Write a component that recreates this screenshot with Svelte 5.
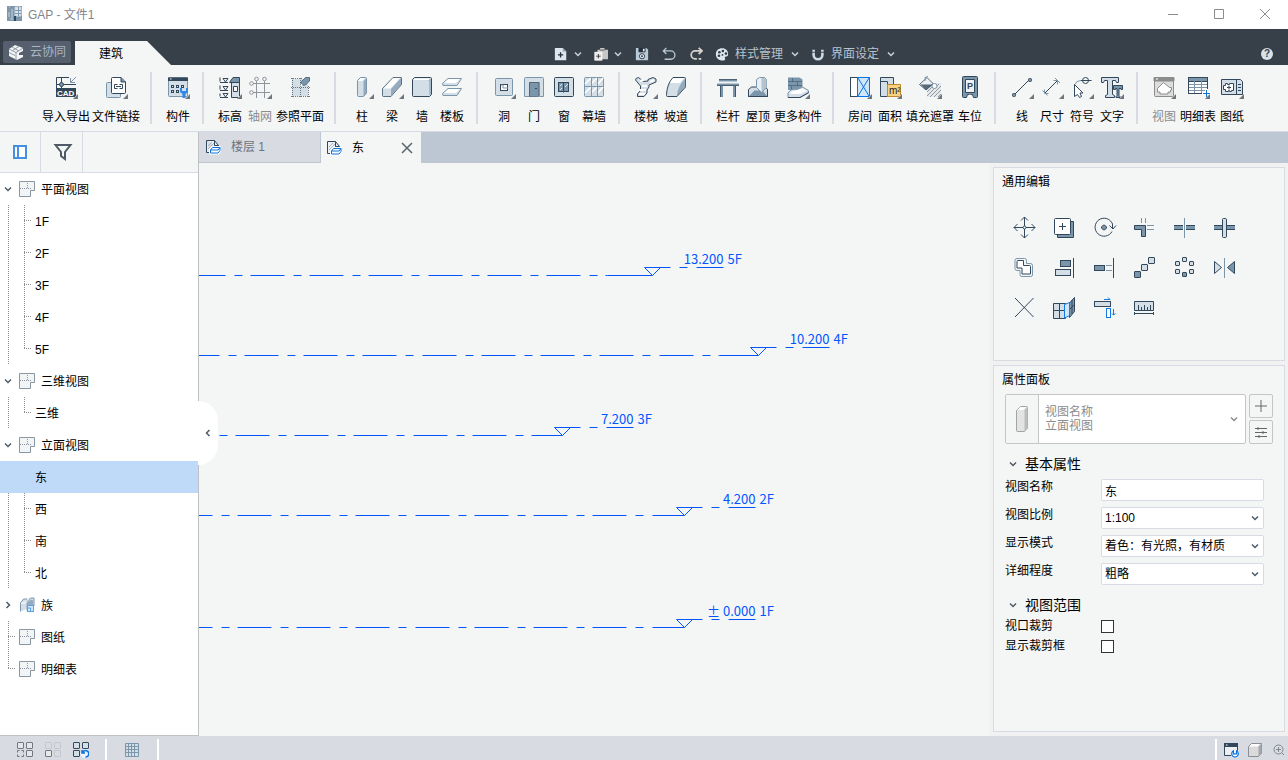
<script lang="ts">
	type Tool = { label: string; icon: string; more?: boolean; disabled?: boolean };

	const D = '#33475b';
	const M = '#7b96ab';
	const L = '#d3dee6';
	const B = '#1479e8';

	const square = (x: number, y: number, s: number, fill = L, stroke = D) =>
		`<rect x="${x}.5" y="${y}.5" width="${s}" height="${s}" rx="0.5" fill="${fill}" stroke="${stroke}"/>`;

	// 24px grid, used by the ribbon and the edit panel
	const icons: Record<string, string> = {
		cad: `<path d="M2.5 12V1.5H15M7.5 1v11M2 8.5h20" stroke="${D}"/><circle cx="7.5" cy="8.5" r="2" fill="${M}" stroke="${D}"/><path d="M22 1l-5 5M16.500 2v4.500H21" stroke="${M}"/><rect x="2" y="12" width="20" height="9" fill="${D}"/><text x="3" y="19.500" font-size="8" font-weight="700" font-family="Liberation Sans, sans-serif" fill="#fff">CAD</text>`,
		link: `<path d="M7 6.500H3.500q-1 0-1 1v13q0 1 1 1h12q1 0 1-1V18" fill="${L}" stroke="${M}"/><path d="M7.500 2.500q0-1 1-1H17l4.500 4.500v10.500q0 1-1 1h-12q-1 0-1-1z" fill="#fff" stroke="${D}"/><path d="M17 1.500V6h4.500" fill="${M}" stroke="${D}"/><path d="M13.500 8.500h-3v4h3M15.500 8.500h3v4h-3M12 10.500h5" stroke="${D}"/>`,
		component: `<rect x="2.500" y="1.500" width="19" height="19" rx="1" fill="${L}" stroke="${M}"/><path d="M2 1.500h20V5H2z" fill="${D}"/><path d="M4 3h1.500" stroke="#fff"/><g stroke="${D}"><rect x="5.500" y="9.500" width="2" height="2"/><rect x="10.500" y="9.500" width="2" height="2"/><rect x="15.500" y="9.500" width="2" height="2"/><rect x="5.500" y="14.500" width="2" height="2"/><rect x="10.500" y="14.500" width="2" height="2"/></g><path d="M14 12v4l2.500 2v4h3v-4l2.500-2v-4h-2v3h-4v-3z" fill="#2f88ec"/>`,
		level: `<path d="M2 6.500h8M2 1.500v4M2 14.500h8M2 9.500v4M2 21.500h8M2 17.500v3M5 2.500h5L7.500 6zM5 10.500h5L7.500 14zM5 17.500h5L7.500 21z" stroke="${D}"/><path d="M13.500 6.500h8v15h-8z" fill="${L}" stroke="${D}"/><path d="M11.500 6.500L15 1.500h6.500v5z" fill="${M}" stroke="${D}"/><path d="M15.500 10.500h4v5h-4z" fill="#fff" stroke="${D}"/>`,
		grid: `<g stroke="#8f959b"><path d="M8.500 5v17M16.500 5v17M5 7.500h17M5 16.500h17"/><circle cx="8.500" cy="3" r="1.800"/><circle cx="16.500" cy="3" r="1.800"/><circle cx="3.500" cy="7.500" r="1.800"/><circle cx="3.500" cy="16.500" r="1.800"/></g>`,
		plane: `<path d="M4 3h16v17H4z" fill="${L}"/><path d="M4.500 2v19M12.500 2v19M20.500 10v11M3 2.500h11M3 11.500h19M3 20.500h19" stroke="${D}" stroke-opacity=".7" stroke-dasharray="1 1"/><path d="M12.500 9.500l1-4 4-4h4v3.500l-4 4z" fill="${M}" stroke="${D}" stroke-opacity=".7"/><path d="M12 10.500l3-1-2-2z" fill="#fff"/>`,
		column: `<path d="M7.500 4.500l3-3h5q1 0 1 1V17l-3 3.500h-5q-1 0-1-1z" fill="${L}" stroke="${M}"/><path d="M13.500 5l3-3V17l-3 3.500z" fill="${M}" opacity=".7"/><path d="M8 5l3-3h4l-2.500 3z" fill="#fff"/>`,
		beam: `<path d="M2.500 12.500L13 1.500h8q.5 0 .5.500v6.500L11 20.500H3.500q-1 0-1-1z" fill="${L}" stroke="${D}" stroke-opacity=".75"/><path d="M11 13L21 2v6.500L11 20z" fill="${M}" opacity=".7"/><path d="M3.500 12.500L13.300 2H20l-9.500 10.500z" fill="#fff"/>`,
		wall: `<path d="M2.500 3.500l2-2h16q1 0 1 1v16l-2 2h-16q-1 0-1-1z" fill="${L}" stroke="${D}"/><path d="M20 4v15M19 4.500l2-2" stroke="${M}"/><path d="M3.500 4l1.500-1.500h15L18.500 4z" fill="#fff"/>`,
		slab: `<g fill="${L}" stroke="${M}"><path d="M2.500 7.500L8 2.500h13.500L17 9.500H3z"/><path d="M2.500 17.500L8 12.500h13.500L17 19.500H3z"/></g><path d="M4 7l4.500-4H20l-4 4zM4 17l4.500-4H20l-4 4z" fill="#fff"/>`,
		hole: `<rect x="3.500" y="2.500" width="17" height="17" rx="1" fill="${L}" stroke="${M}"/><rect x="8.500" y="8.500" width="7" height="6" fill="#fff" stroke="${D}"/><path d="M9 9h2v3h5" stroke="${M}"/>`,
		door: `<path d="M2.500 20.500v-18q0-1 1-1h17q1 0 1 1v18h-4v-14h-10v14z" fill="${L}" stroke="${M}"/><path d="M7.500 6.500h9v14h-9z" fill="${M}" stroke="${D}" stroke-opacity=".6"/><path d="M13 12.500h2" stroke="${D}"/>`,
		window: `<rect x="2.500" y="1.500" width="19" height="19" rx="1" fill="${L}" stroke="${D}"/><rect x="6.500" y="6.500" width="10" height="9" fill="${M}" stroke="${D}"/><path d="M11.500 6.500v10" stroke="${D}"/><path d="M8 10l2-2M8 14l2-2M13 11l3-3" stroke="#dfe8ef"/>`,
		curtain: `<rect x="2.500" y="1.500" width="19" height="19" rx="1" fill="${L}" stroke="${M}"/><path d="M3 8l6-6M3 17l6-6M9 8l6-6M9 17l6-6M16 8l5-6M16 17l5-6" stroke="#fff" stroke-width="1.500"/><path d="M9.500 2v19M15.500 2v19M3 10.500h18" stroke="${M}"/>`,
		stair: `<path d="M1.500 4q0-2 3-2.500l5 4 4.500-.5V3.500l5-2 3 1.500v3l-7 3v2l-2 3v3l-3 3.500H3.500V18l3-3.500V10z" fill="${L}" stroke="${D}"/><path d="M8 10h5M6 14h6M5 18h6M6 5l3-1M16 6l4-2" stroke="#fff" stroke-width="2"/>`,
		ramp: `<path d="M2.500 18.500Q3 8 9 1.500h11.500q1 0 1 1V11L13 20.500H3.500q-1 0-1-1z" fill="${L}" stroke="${D}"/><path d="M13 20Q13 11 21.500 2v9z" fill="${M}" opacity=".7"/><path d="M6 7q1-3 3.500-5H20l-4 5z" fill="#fff"/>`,
		railing: `<path d="M3 4.500h18M1 8.500h22" stroke="${M}" stroke-width="2"/><path d="M3 3.500h18M1 9.500h22" stroke="${D}" stroke-opacity=".8"/><path d="M5.500 10v11M18.500 10v11" stroke="${M}" stroke-width="3"/><path d="M4.500 10v11M19.500 10v11" stroke="${D}" stroke-opacity=".8"/>`,
		roof: `<path d="M2.500 20.500v-7l3-2.500h5l3 2 3-2h3l2 2.500v7z" fill="${L}" stroke="${D}"/><path d="M2.500 20.500l6-6h8l5 6z" fill="${M}"/><path d="M10.500 3.500l3-2h5l2 2v8l-5 5-5-5z" fill="#e9eff3" stroke="${M}"/><path d="M15.500 2h3l2 2v7.500l-5 4.500z" fill="#b3c3d0"/><path d="M2.500 20.500h19v-7" stroke="${D}"/>`,
		more: `<path d="M2 1.500h11.500l3 2V14L2 14z" fill="${M}"/><path d="M2 5.500h14M2 9.500h14M6.500 2v4M11.500 6v4M5.500 10v4" stroke="${D}" stroke-opacity=".5"/><path d="M2 17q3-5 9-3.500L16.500 11l6 3.500v2L14 21.500H2z" fill="${L}" stroke="${M}"/><path d="M4 16l5-1.500 8-2 4 2.500-7 3H5z" fill="#fff"/><path d="M2 21.500h12l9-5" stroke="${D}"/>`,
		room: `<rect x="2.500" y="1.500" width="7" height="19" fill="#fff" stroke="${D}"/><rect x="9.500" y="1.500" width="12" height="19" fill="#cfe6fb" stroke="#0c72e0"/><path d="M10 2l11 18M21 2L10 20" stroke="#0c72e0"/>`,
		area: `<path d="M2.500 1.500h13v9h-13z" fill="${L}" stroke="${D}"/><path d="M2.500 5.500h7v15h-7z" fill="${L}" stroke="${D}"/><path d="M9.500 8.500h13v12h-13z" fill="#f9d27f" stroke="#c08a2a"/><text x="11" y="18" font-size="10" font-family="Liberation Sans, sans-serif" fill="#223">m²</text>`,
		mask: `<path d="M9 7h14v14H9z" fill="#e6e9ec"/><path d="M9 12l4-4M9 16l8-8M9 20l12-12M12 21L23 10M16 21l7-7M20 21l3-3" stroke="#8f99a3"/><path d="M1.500 8.500L9 1.500l6 6-7 6.500z" fill="#eef2f5" stroke="${D}" stroke-opacity=".8"/><path d="M2.500 8.500H15L8 14z" fill="${D}" opacity=".8"/><path d="M7 5V1.500l3-1" stroke="${M}"/><circle cx="16.500" cy="10" r="2.500" fill="#fff" stroke="${M}"/>`,
		parking: `<path d="M5.500.500h13q1 0 1 1v19q0 1-1 1h-3l-1-3h-5l-1 3h-3q-1 0-1-1v-19q0-1 1-1z" fill="${M}" stroke="${D}"/><path d="M7.500 3.500h9v13h-9z" fill="#eef2f5" stroke="${D}"/><text x="9" y="13" font-size="9" font-weight="700" font-family="Liberation Sans, sans-serif" fill="${D}">P</text><path d="M10 21l2-3 2 3" fill="#fff"/>`,
		line: `<path d="M4 19L19 4" stroke="${D}"/><rect x="2.500" y="17.500" width="3" height="3" rx="1" fill="${M}" stroke="${D}"/><rect x="18.500" y="2.500" width="3" height="3" rx="1" fill="${M}" stroke="${D}"/>`,
		dimension: `<path d="M5 17L17 5" stroke="${D}"/><path d="M4.500 13.500v4h4M13.500 4.500h4v4M2.500 14.500l5 5M15 2l5 5" stroke="${M}"/>`,
		symbol: `<path d="M5 8.500q1-4 6-4h11" stroke="${M}"/><circle cx="15.500" cy="4.500" r="3" stroke="${D}"/><path d="M11 4.500h10" stroke="${D}"/><path d="M4.500 8.500v12l3-2 2 3 2-1-1.500-3.500h3z" fill="#fff" stroke="${D}"/>`,
		text: `<path d="M1.500 1.500h17v5h-2l-1-2h-3v14l2 1v2h-9v-2l2-1v-14h-3l-1 2h-2z" fill="${L}" stroke="${D}"/><path d="M13.500 9.500h9v4h-1.500v-1h-2v7l1 1v1h-4v-1l1-1v-7h-1.500v1h-2z" fill="${M}" stroke="${D}"/>`,
		view: `<g stroke="#8c8c8c"><rect x="2.500" y="1.500" width="19" height="19" rx="1" fill="#dcdcdc"/><path d="M2 1.500h20V5H2z" fill="#8c8c8c"/><path d="M5.500 12.500l6-6 6 5h2v2.500h-1v2h-2.500v2h-8v-2h-2.500z" fill="#fff"/></g><path d="M4 3h2" stroke="#fff"/>`,
		schedule: `<rect x="2.500" y="1.500" width="19" height="16" fill="#fff" stroke="${D}"/><path d="M2.500 1.500h19v4h-19z" fill="${M}" stroke="${D}"/><path d="M3 8.500h18M3 11.500h18M3 14.500h18M8.500 5v12M15.500 5v12" stroke="${M}"/><path d="M20.500 13v9M16 17.500h9" stroke="#fff" stroke-width="3"/><path d="M20.500 14v7M17 17.500h7" stroke="#0c72e0"/>`,
		sheet: `<path d="M1.500 3.500h19l2 2v13h-21z" fill="${L}" stroke="${D}"/><path d="M16.500 4v14M18 8.500h3M18 11.500h3M18 14.500h3" stroke="${D}"/><path d="M5.500 7.500h2v1h2v-1h4v7h-2v1h-2v-1h-1v1h-3v-2h-2v-4h2zM7 11.500h4M9 9.500v4" fill="#fff" stroke="${D}"/>`,
		move: `<path d="M12.500 2v21M2 12.500h21M9 5.500l3.500-3.500L16 5.500M9 19.500l3.500 3.500 3.500-3.500M5.500 9L2 12.500 5.500 16M19.500 9l3.500 3.500-3.500 3.500" stroke="${D}"/><circle cx="12.500" cy="12.500" r="1.500" fill="#fff" stroke="${D}"/>`,
		copy: `<path d="M5.500 6.500h16v16h-16z" fill="${M}" stroke="${D}"/><rect x="2.500" y="3.500" width="16" height="16" rx="1" fill="#fff" stroke="${D}"/><path d="M7 11.500h7M10.500 8v7" stroke="${D}"/>`,
		rotate: `<path d="M20 16.500A9 9 0 1 1 20.500 9v4.500M17.500 10.500l3.500 3.500 3-3.500" stroke="${D}"/><path d="M11.500 10h1l2 2v1l-2 2h-1l-2-2v-1z" fill="${M}" stroke="${D}"/>`,
		trim: `<path d="M2.500 10.500h11v11h-4v-7h-7z" fill="${M}" stroke="${D}"/><path d="M9.500 3v5M13.500 3v5M15 10.500h7M15 14.500h7" stroke="${M}"/>`,
		split: `<path d="M2 12.500h21" stroke="${M}" stroke-width="3"/><path d="M2 10.500h21M2 14.500h21" stroke="${D}"/><path d="M12.500 9v8" stroke="#f4f6f6" stroke-width="3"/><path d="M12.500 3v20" stroke="${M}"/>`,
		splitGap: `<path d="M2 12.500h21" stroke="${M}" stroke-width="3"/><path d="M2 10.500h21M2 14.500h21" stroke="${D}"/><rect x="10.500" y="3.500" width="4" height="19" rx="1" fill="${L}" stroke="${D}"/>`,
		offset: `<path d="M5 3.500h7.500q2 0 2 2v3h4q2 0 2 2V20q0 1.500-2 1.500H10q-2 0-2-2v-4H5q-2 0-2-2v-8q0-2 2-2z" stroke="${M}"/><path d="M5 6.500q0-1 1-1h5.500v5h6q1 0 1 1v7.500h-8.500v-6H5z" fill="#fff" stroke="${D}"/>`,
		align: `<rect x="8.500" y="5.500" width="10" height="6" fill="${M}" stroke="${D}"/><rect x="3.500" y="14.500" width="15" height="6" fill="${L}" stroke="${D}"/><path d="M21.500 3v20" stroke="${D}"/>`,
		extend: `<rect x="2.500" y="10.500" width="10" height="5" fill="${M}" stroke="${D}"/><path d="M14 10.500h6M14 15.500h6" stroke="${M}"/><path d="M21.500 3v20" stroke="${D}"/>`,
		array: square(2, 16, 6, M) + square(9, 9, 6) + square(16, 2, 6),
		radial: square(10, 2, 4) + square(3, 6, 4) + square(17, 6, 4) + square(3, 14, 4) + square(17, 14, 4) + square(10, 17, 4, M),
		mirror: `<path d="M2.500 6.500v12l7-6z" fill="${L}" stroke="${D}"/><path d="M22.500 6.500v12l-7-6z" fill="${M}" stroke="${D}"/><path d="M12.500 3v20" stroke="${M}"/>`,
		erase: `<path d="M3 3l18.500 19M21.500 3L3 22" stroke="${D}"/>`,
		facade: `<path d="M1.500 8.500h12v15h-12z" fill="${L}" stroke="${D}"/><path d="M2 15.500h12M7.500 8.500v15" stroke="${D}"/><path d="M17.500 8l5-5.500v14l-5 6z" fill="${M}" stroke="${D}"/><path d="M20 5v14M17 15l6-6" stroke="${D}"/><path d="M12.500 9.500l5-2v13l-5 2.500z" fill="#cfe6fb" stroke="${B}"/>`,
		pull: `<rect x="2.500" y="6.500" width="16" height="5" fill="${L}" stroke="${D}"/><path d="M12 4.500h6l-2-2M21.500 14v6M20 18.500l1.500 1.500 2-1.500" stroke="${B}"/><rect x="14.500" y="13.500" width="4" height="9" fill="#fff" stroke="${B}"/>`,
		measure: `<path d="M2.500 6.500h19v9h-19z" fill="${L}" stroke="${D}"/><path d="M6.500 10v5M9.500 12v3M12.500 10v5M15.500 12v3M18.500 10v5M2 18.500h20M2.500 17v3M21.500 17v3" stroke="${D}"/>`
	};

	// 16px grid
	const small: Record<string, string> = {
		app: `<rect x="0" y="0" width="15" height="15" fill="#7f97ac"/><path d="M8 1h6v9H8zM2 1h1M5 3v9M2 6v5M3 13h3" fill="#dfe8ef" stroke="#c2d1dd"/><path d="M11.500 1v9M8 4.500h6M8 7.500h6" stroke="#7f97ac"/><path d="M8 10v5" stroke="#2d4a66" stroke-width="2"/>`,
		cloud: `<path d="M1 5l6-4 8 3v3l-4 2v2h4v2l-6 3-8-4z" fill="#f4f6f6"/><path d="M1 5l7 3.500L15 4M1 8.500l6 3M4 3l7 4M8 8v8M11 2.500L4.500 6.500" stroke="#909aa6"/>`,
		add: `<path d="M1 1h9l4 4v10H1z" fill="#dce6ee"/><path d="M10 1v4h4" fill="#8fa3b5"/><path d="M7.500 6v6M4.500 9h6" stroke="#26313d" stroke-width="1.500"/>`,
		paste: `<path d="M4 3h3V1h5v2h4v11H4z" fill="#c6c6c6"/><path d="M7 3.500h5" stroke="#555"/><rect x="1" y="6" width="8" height="9" fill="#e8e8e8" stroke="#fff"/><path d="M5 8v5M2.500 10.500h5" stroke="#333"/>`,
		save: `<path d="M1 1h12l2 2v12H1z" fill="#b9cbd9"/><path d="M4 1h8v5H4z" fill="#26313d"/><path d="M9 2h2v3H9z" fill="#dce6ee"/><circle cx="8" cy="10.500" r="3" fill="#dce6ee" stroke="#26313d"/><circle cx="8" cy="10.500" r="1" fill="#26313d"/>`,
		undo: `<path d="M5 1L1.500 4.500 5 8M2 4.500h8a4.500 4.500 0 0 1 0 9.500H3" stroke="#b9cbd9" stroke-width="1.500"/>`,
		redo: `<path d="M11 1l4 3.500L11 8M14 4.500H7a4.500 4.500 0 0 0 0 9h2M11 13.500h3" stroke="#d6d2cc" stroke-width="2"/>`,
		palette: `<path d="M8 1.500c4.500 0 7 3 7 6.500 0 3-2 3-3 3s-1 1-.5 2-.5 2.500-2.500 2.500C5 15.500 1 13 1 8.500S4 1.500 8 1.500z" fill="#dce6ee"/><g fill="#33404d"><circle cx="5" cy="6" r="1.500"/><circle cx="9" cy="4.500" r="1.500"/><circle cx="12.500" cy="7.500" r="1.500"/><circle cx="4.500" cy="10" r="1.500"/><circle cx="8.500" cy="9" r="1"/></g>`,
		magnet: `<path d="M3 3v6a5 5 0 0 0 10 0V3" stroke="#c9d9e5" stroke-width="3"/><path d="M1 6h4M11 6h4" stroke="#33404d"/>`,
		doc: `<path d="M1.500 1.500h8l4 5v3M1.500 1.500v12h4" fill="#e8eef3" stroke="${D}"/><path d="M3 7l4-4M3 10l6-6M4 12l6-6" stroke="#9fb3c4"/><path d="M9.500 1.500v5h4" stroke="${D}"/><path d="M5.500 10.500l2-2h7.500v3l-2 2.500H5.500z" fill="#fff" stroke="#fff" stroke-width="3"/><path d="M5.500 11l2-2.500h7.500v3l-2 2.500H5.500zM5.500 11h7.500l2-2.500" fill="#fff" stroke="#0c72e0"/>`,
		sheetTree: `<path d="M.5.500h15v9h-4v6H.500z" fill="#f2f4f6" stroke="#8b96a3"/><path d="M8.500 2v6M1 7.500h11" stroke="#8b96a3" stroke-dasharray="1 1"/>`,
		family: `<path d="M1.500 14.500V6l3-4h4l-1 3 4-4H15v8" fill="${L}" stroke="${M}"/><path d="M7.500 14V6L12 2.500l2 1V9h-4v5z" fill="${M}" opacity=".7"/><path d="M2 6h4l3-4" stroke="#fff"/><rect x="8.500" y="8.500" width="6" height="6" fill="#cfe6fb" stroke="#5aa2e8"/><path d="M8.500 11h3v3" stroke="#5aa2e8"/>`,
		tiles: square(0, 0, 6, '#e4e6ea', '#74777c') + square(9, 0, 6, '#e4e6ea', '#74777c') + square(9, 8, 6, '#e4e6ea', '#74777c') + `<path d="M.5 10.500v-2h2M4.500 8.500h2v2M6.500 12.500v2h-2M2.500 14.500h-2v-2" stroke="#74777c"/>`,
		tilesOff: square(0, 0, 6, 'none', '#c4c7cd') + square(9, 0, 6, 'none', '#c4c7cd') + square(9, 8, 6, 'none', '#c4c7cd') + square(0, 8, 6, '#e9e9e9', '#74777c'),
		tilesReset: square(0, 0, 6) + square(9, 0, 6) + square(0, 8, 6) + `<circle cx="12" cy="11.500" r="4.500" fill="#eef3fa"/><path d="M9 8v3h3M9.500 11a3.200 3.200 0 1 1 3 4" stroke="#0c72e0" stroke-width="1.500"/>`,
		mesh: `<path d="M2 2h12v12H2z" fill="${L}"/><path d="M1.500 1.500h13v13h-13zM4.500 1v13M7.500 1v13M10.500 1v13M1 4.500h13M1 7.500h13M1 10.500h13" stroke="${M}"/>`,
		win: `<path d="M1.500 2.500h13v11h-13z" fill="#eceef2" stroke="${D}"/><path d="M1 1h14v4H1z" fill="${D}"/><path d="M3 3h1.500" stroke="#fff"/><circle cx="12" cy="12" r="4" fill="#fff"/><path d="M10.500 8.800a3.300 3.300 0 1 0 3 0v3h-3z" stroke="#0c72e0" stroke-width="1.200"/>`,
		cube: `<path d="M1.500 4.500l3-3h10v10l-3 3h-10z" fill="#dadada" stroke="#8b8f95"/><path d="M11.500 4.500l3-3v10l-3 3z" fill="#a3a8ae"/><path d="M2.500 4.500l2-2.500H13l-2 2.500z" fill="#fff"/>`,
		zoom: `<circle cx="7.500" cy="7.500" r="4.500" stroke="#81868d"/><path d="M5 7.500h5M7.500 5v5M11 11l2 2" stroke="#81868d"/>`,
		sidebar: `<rect x="2" y="2" width="12" height="12" fill="#fff" stroke="#4590e3" stroke-width="2"/><path d="M6 2v12" stroke="#4590e3" stroke-width="2"/>`
	};

	const t = (label: string, icon: string, more = false, disabled = false): Tool => ({ label, icon, more, disabled });

	const ribbon: Tool[][] = [
		[t('导入导出', 'cad', true), t('文件链接', 'link', true)],
		[t('构件', 'component', true)],
		[t('标高', 'level', true), t('轴网', 'grid', true, true), t('参照平面', 'plane')],
		[t('柱', 'column', true), t('梁', 'beam', true), t('墙', 'wall'), t('楼板', 'slab')],
		[t('洞', 'hole', true), t('门', 'door'), t('窗', 'window'), t('幕墙', 'curtain')],
		[t('楼梯', 'stair', true), t('坡道', 'ramp')],
		[t('栏杆', 'railing'), t('屋顶', 'roof'), t('更多构件', 'more', true)],
		[t('房间', 'room', true), t('面积', 'area', true), t('填充遮罩', 'mask', true), t('车位', 'parking')],
		[t('线', 'line', true), t('尺寸', 'dimension', true), t('符号', 'symbol', true), t('文字', 'text', true)],
		[t('视图', 'view', true, true), t('明细表', 'schedule', true), t('图纸', 'sheet', true)]
	];

	const editTools = [
		t('移动', 'move'), t('复制', 'copy'), t('旋转', 'rotate'), t('修剪', 'trim'), t('打断', 'split'), t('间隙打断', 'splitGap'),
		t('偏移', 'offset'), t('对齐', 'align'), t('延伸', 'extend'), t('阵列', 'array'), t('环形阵列', 'radial'), t('镜像', 'mirror'),
		t('删除', 'erase'), t('幕墙编辑', 'facade'), t('拉伸', 'pull'), t('测量', 'measure')
	];

	const tree = [
		{ label: '平面视图', icon: 'sheetTree', open: true, children: ['1F', '2F', '3F', '4F', '5F'] },
		{ label: '三维视图', icon: 'sheetTree', open: true, children: ['三维'] },
		{ label: '立面视图', icon: 'sheetTree', open: true, children: ['东', '西', '南', '北'] },
		{ label: '族', icon: 'family', open: false, children: [] },
		{ label: '图纸', icon: 'sheetTree', leaf: true, children: [] },
		{ label: '明细表', icon: 'sheetTree', leaf: true, children: [] }
	];

	let selected = $state('东');
	let viewName = $state('东');

	// start: first dash, tail: last solid piece, tip: apex of the level mark
	const levels = [
		{ name: '5F', value: '13.200', y: 112, start: -8, tail: 408, tip: 453 },
		{ name: '4F', value: '10.200', y: 192, start: -14, tail: 520, tip: 559 },
		{ name: '3F', value: '7.200', y: 272, start: -23, tail: 332, tip: 363 },
		{ name: '2F', value: '4.200', y: 352, start: -21, tail: 453, tip: 485 },
		{ name: '1F', value: '± 0.000', y: 464, start: -21, tail: 453, tip: 485 }
	];

	const fields = [
		{ id: 'scale', label: '视图比例', value: '1:100' },
		{ id: 'mode', label: '显示模式', value: '着色：有光照，有材质' },
		{ id: 'detail', label: '详细程度', value: '粗略' }
	];
</script>

{#snippet icon16(name: string)}
	<svg class="i16" viewBox="0 0 16 16" fill="none" aria-hidden="true">{@html small[name]}</svg>
{/snippet}

{#snippet chevron(dir = 'down')}
	<svg class="chev {dir}" viewBox="0 0 8 8" fill="none" aria-hidden="true">
		<path d="M1 2.500l3 3 3-3" stroke="currentColor" stroke-width="1.500" />
	</svg>
{/snippet}

<div class="app">
	<header class="titlebar">
		{@render icon16('app')}
		<span class="title">GAP - 文件1</span>
		<button aria-label="最小化"><svg viewBox="0 0 12 12"><path d="M1 6.500h10" /></svg></button>
		<button aria-label="最大化"><svg viewBox="0 0 12 12"><path d="M1.500 1.500h9v9h-9z" /></svg></button>
		<button aria-label="关闭"><svg viewBox="0 0 12 12"><path d="M1 1l10 10M11 1L1 11" /></svg></button>
	</header>

	<nav class="menubar">
		<button class="cloud">{@render icon16('cloud')}云协同</button>
		<button class="maintab">建筑</button>
		<div class="quick">
			<button aria-label="新建">{@render icon16('add')}{@render chevron()}</button>
			<button aria-label="粘贴">{@render icon16('paste')}{@render chevron()}</button>
			<button aria-label="保存" class="single">{@render icon16('save')}</button>
			<button aria-label="撤销" class="single">{@render icon16('undo')}</button>
			<button aria-label="重做" class="single">{@render icon16('redo')}</button>
			<button><span class="named">{@render icon16('palette')}样式管理</span>{@render chevron()}</button>
			<button><span class="named">{@render icon16('magnet')}界面设定</span>{@render chevron()}</button>
		</div>
		<button class="help" aria-label="帮助">?</button>
	</nav>

	<div class="ribbon">
		{#each ribbon as group}
			<div class="group">
				{#each group as tool}
					<button class="tool len{tool.label.length}" disabled={tool.disabled}>
						<svg viewBox="0 0 24 24" fill="none" aria-hidden="true">
							{@html icons[tool.icon]}
							{#if tool.more}<path d="M24 18v5h-5z" fill="#6f767e" stroke="#f4f6f6" stroke-width="1" paint-order="stroke" />{/if}
						</svg>
						<span>{tool.label}</span>
					</button>
				{/each}
			</div>
		{/each}
	</div>

	<div class="body">
		<aside class="sidebar">
			<div class="sidetools">
				<button aria-label="项目浏览器">{@render icon16('sidebar')}</button>
				<button aria-label="筛选" class="filter">
					<svg class="funnel" viewBox="0 0 20 18" fill="none">
						<path d="M2.500 2h15L12 9v7l-4-3V9z" stroke="#4e5a66" stroke-width="2" />
					</svg>
				</button>
			</div>
			<ul class="tree">
				{#each tree as node, n}
					<li>
						<button class="node" class:leaf={node.leaf} class:last={n === tree.length - 1}>
							<span class="twist">{#if !node.leaf}{@render chevron(node.open ? 'down' : 'right')}{/if}</span>
							{@render icon16(node.icon)}
							<span class="name">{node.label}</span>
						</button>
						{#if node.open}
							<ul>
								{#each node.children as child, c}
									<li>
										<button
											class="child"
											class:selected={selected === child}
											class:last={c === node.children.length - 1}
											onclick={() => (selected = child)}><span class="name">{child}</span></button
										>
									</li>
								{/each}
							</ul>
						{/if}
					</li>
				{/each}
			</ul>
			<button class="handle" aria-label="收起">{@render chevron('left')}</button>
		</aside>

		<section class="workspace">
			<div class="tabs">
				<button class="tab">{@render icon16('doc')}<span>楼层 1</span></button>
				<div class="tab active">
					{@render icon16('doc')}<span>东</span>
					<button class="close" aria-label="关闭标签">
						<svg viewBox="0 0 12 12"><path d="M1 1l10 10M11 1L1 11" /></svg>
					</button>
				</div>
			</div>

			<div class="content">
				<svg class="drawing" role="img" aria-label="东立面">
					{#each levels as l}
						<g transform="translate(0.5 {l.y + 0.5})">
							<path class="dash" d="M{l.start} 0H{l.tail}" />
							<path d="M{l.tail} 0H{l.tip}" />
							<path d="M{l.tip - 8} -8H{l.tip + 18}M{l.tip + 27} -8h8M{l.tip + 44} -8h27" />
							<path d="M{l.tip - 8} -8l8 8 8 -8" />
							<text x={l.tip + 71} y="-12" text-anchor="end">{l.value}</text>
							<text x={l.tip + 75} y="-12">{l.name}</text>
						</g>
					{/each}
				</svg>

				<aside class="side">
					<section class="panel edit">
						<h2>通用编辑</h2>
						<div class="grid">
							{#each editTools as tool}
								<button aria-label={tool.label}>
									<svg viewBox="0 0 24 24" fill="none">{@html icons[tool.icon]}</svg>
								</button>
							{/each}
						</div>
					</section>

					<section class="panel props">
						<h2>属性面板</h2>
						<div class="picker">
							<button class="type">
								<span class="thumb">
									<svg viewBox="0 0 14 28" fill="none">
										<path d="M1.500 5.500l4-4h6q1 0 1 1V23l-3 3.500h-7q-1 0-1-1z" fill="#e3e3e3" stroke="#a3a3a3" />
										<path d="M9.500 5l3-3V23l-3 3z" fill="#bdbdbd" />
										<path d="M2.500 5l3-3H11L8.500 5z" fill="#fff" />
									</svg>
								</span>
								<span class="names">视图名称<br />立面视图</span>
								{@render chevron()}
							</button>
							<div class="actions">
								<button aria-label="新增"><svg viewBox="0 0 12 12"><path d="M6 0v12M0 6h12" /></svg></button>
								<button aria-label="设置"><svg viewBox="0 0 12 12"><path d="M0 2.500h12M0 6.500h12M0 10.500h12M3 1v3M8 5v3M4 9v3" /></svg></button>
							</div>
						</div>

						<h3>{@render chevron()}基本属性</h3>
						<div class="row">
							<label for="view-name">视图名称</label>
							<input id="view-name" type="text" bind:value={viewName} />
						</div>
						{#each fields as f}
							<div class="row">
								<label for={f.id}>{f.label}</label>
								<div class="select">
									<select id={f.id}><option>{f.value}</option></select>
									{@render chevron()}
								</div>
							</div>
						{/each}

						<h3 class="range">{@render chevron()}视图范围</h3>
						<div class="check"><label for="crop">视口裁剪</label><input id="crop" type="checkbox" /></div>
						<div class="check"><label for="crop-box">显示裁剪框</label><input id="crop-box" type="checkbox" /></div>
					</section>
				</aside>
			</div>
		</section>
	</div>

	<footer class="status">
		<div class="cell first">
			<button aria-label="选择">{@render icon16('tiles')}</button>
			<button aria-label="单选">{@render icon16('tilesOff')}</button>
			<button aria-label="恢复">{@render icon16('tilesReset')}</button>
		</div>
		<div class="cell"><button aria-label="网格">{@render icon16('mesh')}</button></div>
		<div class="cell right">
			<button aria-label="窗口">{@render icon16('win')}</button>
			<button aria-label="视图方块">{@render icon16('cube')}</button>
			<button aria-label="缩放">{@render icon16('zoom')}</button>
		</div>
	</footer>
</div>

<style>
	:global(body) {
		margin: 0;
	}

	.app {
		display: flex;
		flex-direction: column;
		height: 100vh;
		overflow: hidden;
		background: #f4f6f6;
		color: #000;
		font-family: 'Liberation Sans', 'Noto Sans CJK SC', sans-serif;
		font-size: 12px;
		line-height: 16px;
	}

	button {
		display: flex;
		align-items: center;
		justify-content: center;
		padding: 0;
		border: 0;
		background: none;
		color: inherit;
		font: inherit;
		white-space: nowrap;
	}

	svg {
		display: block;
		flex: none;
	}

	.i16 {
		width: 16px;
		height: 16px;
	}

	.chev {
		width: 8px;
		height: 8px;
		color: #4e5a66;
	}

	.chev.right {
		transform: rotate(-90deg);
	}

	.chev.left {
		transform: rotate(90deg);
	}

	.titlebar {
		display: flex;
		align-items: center;
		flex: none;
		height: 29px;
		padding-left: 7px;
		background: #fff;
	}

	.title {
		flex: 1;
		padding: 0 5px;
		color: #7f868d;
	}

	.titlebar .i16 {
		margin-bottom: 2px;
	}

	.titlebar button {
		width: 46px;
		height: 27px;
		align-self: flex-start;
	}

	.titlebar button svg {
		width: 12px;
		height: 12px;
		fill: none;
		stroke: #8c8c8c;
	}

	.menubar {
		display: flex;
		flex: none;
		align-items: flex-end;
		height: 36px;
		background: #373f49;
		color: #b9c3cd;
	}

	.cloud {
		gap: 6px;
		width: 68px;
		height: 22px;
		margin: 0 4px 2px 3px;
		border-radius: 2px;
		background: #555f6d;
		color: #a9b5c2;
	}

	.maintab {
		width: 96px;
		height: 24px;
		padding: 2px 24px 0 0;
		background: #f4f6f6;
		color: #000;
		clip-path: polygon(0 0, 72px 0, 100% 100%, 0 100%);
	}

	.quick {
		display: flex;
		gap: 12px;
		height: 22px;
		margin-left: 383px;
	}

	.quick button {
		gap: 6px;
	}

	.quick .i16 {
		width: 14px;
		height: 14px;
	}

	.quick .single {
		width: 15px;
	}

	.named {
		display: flex;
		align-items: center;
		gap: 6px;
		padding-right: 2px;
	}

	.quick .chev {
		color: #c9d1d9;
	}

	.help {
		width: 12px;
		height: 12px;
		margin: 0 15px 5px auto;
		border-radius: 50%;
		background: #d7e2ea;
		color: #33404d;
		font-size: 10px;
		font-weight: 700;
		line-height: 12px;
	}

	.ribbon {
		display: flex;
		flex: none;
		height: 52px;
		padding: 7px 0 7px 30px;
		border-bottom: 1px solid #d9dbe3;
	}

	.group {
		display: flex;
		padding: 0 9px 0 11px;
		border-right: 2px solid #d9dbe3;
	}

	.group:last-child {
		border-right: 0;
	}

	.tool {
		flex-direction: column;
		gap: 9px;
		width: 30px;
		padding-top: 5px;
	}

	.tool.len3 {
		width: 38px;
	}

	.tool.len4 {
		width: 50px;
	}

	.tool svg,
	.grid svg {
		width: 24px;
		height: 24px;
		overflow: visible;
	}

	.tool:disabled {
		color: #8c8c8c;
	}

	.body {
		display: flex;
		flex: 1;
		min-height: 0;
	}

	.sidebar {
		position: relative;
		flex: none;
		width: 198px;
		border-right: 1px solid #bfc1c4;
		border-bottom: 1px solid #bfc1c4;
		background: #fff;
	}

	.sidetools {
		display: flex;
		height: 40px;
		border-bottom: 1px solid #d9dbe3;
		background: #f4f6f6;
	}

	.sidetools button {
		width: 41px;
		border-right: 1px solid #d9dbe3;
	}

	.sidetools .filter {
		width: 42px;
		padding-left: 2px;
	}

	.sidetools .funnel {
		width: 20px;
		height: 18px;
	}

	.tree,
	.tree ul {
		margin: 0;
		padding: 0;
		list-style: none;
	}

	.node,
	.child {
		position: relative;
		justify-content: flex-start;
		width: 100%;
		height: 32px;
	}

	.node {
		gap: 6px;
	}

	.name {
		padding-top: 2px;
	}

	.twist {
		width: 9px;
		padding-left: 4px;
	}

	.child {
		padding-left: 35px;
	}

	.tree ul {
		background: linear-gradient(#8b8f94 1px, transparent 1px) 8px 0 / 1px 2px repeat-y;
	}

	.child::before,
	.leaf::before {
		content: '';
		position: absolute;
		top: 0;
		left: 24px;
		width: 7px;
		height: 16px;
		background:
			linear-gradient(#8b8f94 1px, transparent 1px) 0 0 / 1px 2px repeat-y,
			linear-gradient(90deg, #8b8f94 1px, transparent 1px) 0 100% / 2px 1px repeat-x;
	}

	.child:not(.last)::after,
	.leaf:not(.last)::after {
		content: '';
		position: absolute;
		top: 16px;
		bottom: 0;
		left: 24px;
		width: 1px;
		background: linear-gradient(#8b8f94 1px, transparent 1px) 0 0 / 1px 2px repeat-y;
	}

	.leaf::before,
	.leaf:not(.last)::after {
		left: 8px;
	}

	.child.selected {
		background: #bfd9f8;
	}

	.child.selected::before,
	.child.selected::after {
		display: none;
	}

	.handle {
		position: absolute;
		top: 269px;
		right: -20px;
		width: 20px;
		height: 64px;
		border-radius: 0 20px 20px 0;
		background: #fff;
	}

	.workspace {
		display: flex;
		flex: 1;
		flex-direction: column;
		min-width: 0;
	}

	.tabs {
		display: flex;
		flex: none;
		height: 31px;
		background: #bdc7d3;
	}

	.tab {
		display: flex;
		align-items: center;
		justify-content: flex-start;
		gap: 10px;
		width: 121px;
		height: 30px;
		padding-left: 6px;
		margin-right: 1px;
		background: #d9dbe3;
		color: #6c747d;
		box-sizing: border-box;
	}

	.tab.active {
		width: 100px;
		height: 31px;
		margin: 0;
		padding: 0 8px 0 5px;
		background: #f4f6f6;
		color: #000;
	}

	.tab.active svg + span {
		flex: 1;
	}

	.close svg {
		width: 12px;
		height: 12px;
		stroke: #59636e;
		stroke-width: 1.5;
	}

	.content {
		display: flex;
		flex: 1;
		min-height: 0;
	}

	.drawing {
		flex: 1;
		width: 0;
		height: 100%;
		overflow: hidden;
		fill: none;
		stroke: #0055ff;
	}

	.drawing .dash {
		stroke-dasharray: 34 9 8 8 34 9 8 8 34 9 8 8 34 9 8 9;
	}

	.drawing text {
		fill: #0055ff;
		stroke: none;
		font-family: 'Noto Sans CJK SC', sans-serif;
		font-size: 13px;
	}

	.side {
		display: flex;
		flex: none;
		flex-direction: column;
		gap: 4px;
		box-sizing: border-box;
		width: 299px;
		padding: 4px 3px 4px 4px;
		background: #f1f1f2;
	}

	.panel {
		border: 1px solid #d9dbe3;
		background: #f4f6f6;
	}

	.edit {
		height: 192px;
	}

	.props {
		flex: 1;
	}

	h2 {
		margin: 6px 8px 0;
		font-size: 12px;
		font-weight: 400;
		line-height: 16px;
	}

	.grid {
		display: grid;
		grid-template-columns: repeat(6, 40px);
		grid-auto-rows: 40px;
		margin: 17px 8px 0 10px;
	}

	.picker {
		display: flex;
		gap: 3px;
		margin: 6px 11px 0;
	}

	.type {
		flex: 1;
		box-sizing: border-box;
		height: 50px;
		padding-right: 7px;
		border: 1px solid #c5c5c5;
		border-radius: 2px;
		background: #fff;
		color: #8c8c8c;
		line-height: 14px;
		text-align: left;
	}

	.thumb {
		display: flex;
		align-items: center;
		justify-content: center;
		width: 32px;
		height: 48px;
		border-right: 1px solid #c5c5c5;
		background: #f4f6f6;
	}

	.thumb svg {
		width: 14px;
		height: 28px;
	}

	.names {
		flex: 1;
		padding-left: 6px;
	}

	.type .chev {
		color: #8c8c8c;
	}

	.actions {
		display: flex;
		flex-direction: column;
		gap: 2px;
	}

	.actions button {
		box-sizing: border-box;
		width: 24px;
		height: 24px;
		border: 1px solid #c5c5c5;
		border-radius: 2px;
	}

	.actions svg {
		width: 12px;
		height: 12px;
		stroke: #666;
	}

	h3 {
		display: flex;
		align-items: center;
		gap: 8px;
		margin: 10px 0 5px 15px;
		font-size: 14px;
		font-weight: 400;
		line-height: 20px;
	}

	h3.range {
		margin-bottom: 1px;
	}

	.row {
		display: flex;
		height: 22px;
		margin: 0 20px 6px 11px;
	}

	.row label,
	.check label {
		width: 96px;
	}

	.row label {
		line-height: 16px;
	}

	.row input,
	.select {
		flex: 1;
		min-width: 0;
		box-sizing: border-box;
		height: 22px;
		border: 1px solid #d9dbe3;
		border-radius: 2px;
		background: #fff;
	}

	.row input,
	.select select {
		padding: 0 3px;
		color: #000;
		font: inherit;
	}

	.select {
		display: flex;
		align-items: center;
		padding-right: 4px;
	}

	.select select {
		flex: 1;
		min-width: 0;
		height: 20px;
		border: 0;
		background: none;
		appearance: none;
	}

	.check {
		display: flex;
		align-items: center;
		height: 20px;
		margin: 0 11px;
	}

	.check input {
		appearance: none;
		box-sizing: border-box;
		width: 13px;
		height: 13px;
		margin: 0;
		border: 1px solid #333;
		background: #fff;
	}

	.status {
		display: flex;
		flex: none;
		align-items: flex-end;
		height: 24px;
		background: #d9dbe3;
	}

	.cell {
		display: flex;
		align-items: center;
		gap: 12px;
		height: 21px;
		padding: 0 17px;
		border-right: 2px solid #fff;
	}

	.cell.first {
		padding: 0 16px 0 17px;
	}

	.cell.right {
		gap: 8px;
		margin-left: auto;
		padding: 0 1px 0 6px;
		border-right: 0;
		border-left: 2px solid #fff;
	}
</style>
